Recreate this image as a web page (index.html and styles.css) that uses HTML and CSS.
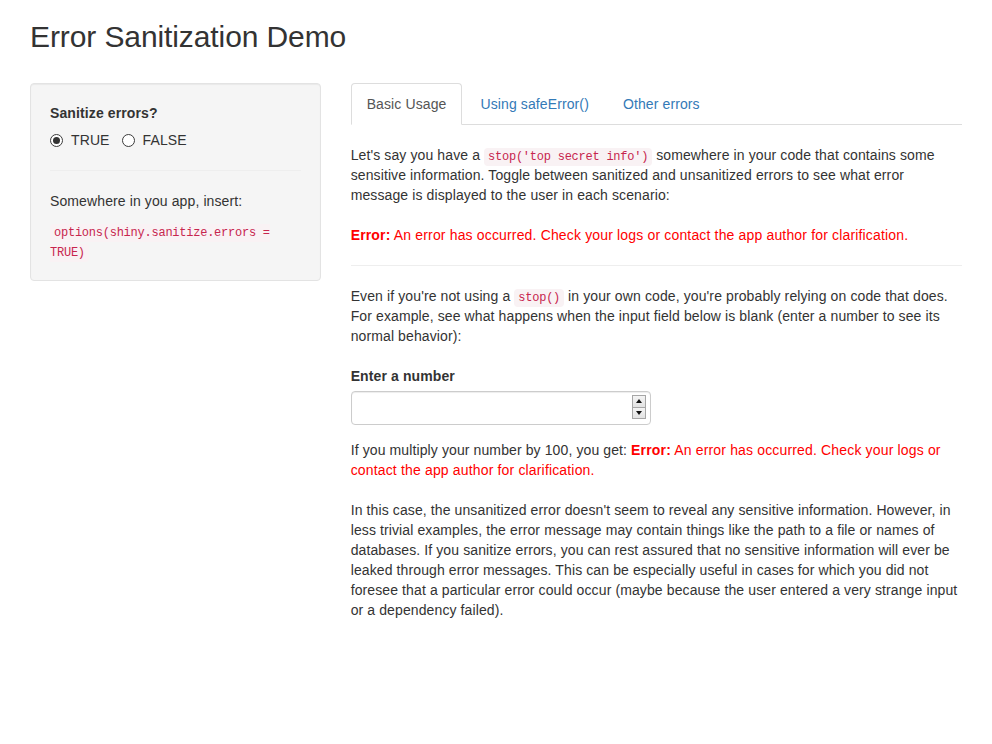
FILE: index.html
```html
<!DOCTYPE html>
<html lang="en">
<head>
<meta charset="utf-8">
<title>Error Sanitization Demo</title>
<link rel="stylesheet" href="styles.css">
</head>
<body>
<h2 class="title">Error Sanitization Demo</h2>
<div class="layout">
  <aside class="well">
    <div class="group-label">Sanitize errors?</div>
    <div class="radios">
      <label class="radio"><span class="circle checked"></span><span>TRUE</span></label>
      <label class="radio"><span class="circle"></span><span>FALSE</span></label>
    </div>
    <hr class="well-rule">
    <p class="well-text">Somewhere in you app, insert:</p>
    <div class="well-code"><code>options(shiny.sanitize.errors = TRUE)</code></div>
  </aside>
  <main class="main">
    <ul class="tabs">
      <li class="tab active"><a>Basic Usage</a></li>
      <li class="tab"><a>Using safeError()</a></li>
      <li class="tab"><a>Other errors</a></li>
    </ul>
    <div class="pane">
      <p class="para gap">Let's say you have a <code>stop('top secret info')</code> somewhere in your code that contains some sensitive information. Toggle between sanitized and unsanitized errors to see what error message is displayed to the user in each scenario:</p>
      <div class="error"><strong>Error:</strong> An error has occurred. Check your logs or contact the app author for clarification.</div>
      <hr class="rule">
      <p class="para gap">Even if you're not using a <code>stop()</code> in your own code, you're probably relying on code that does. For example, see what happens when the input field below is blank (enter a number to see its normal behavior):</p>
      <div class="form-group">
        <label class="field-label">Enter a number</label>
        <div class="input-wrap">
          <input class="num-input" type="text" value="">
          <div class="spinner">
            <span class="spin up"></span>
            <span class="spin down"></span>
          </div>
        </div>
      </div>
      <p class="para gap">If you multiply your number by 100, you get: <span class="error"><strong>Error:</strong> An error has occurred. Check your logs or contact the app author for clarification.</span></p>
      <p class="para">In this case, the unsanitized error doesn't seem to reveal any sensitive information. However, in less trivial examples, the error message may contain things like the path to a file or names of databases. If you sanitize errors, you can rest assured that no sensitive information will ever be leaked through error messages. This can be especially useful in cases for which you did not foresee that a particular error could occur (maybe because the user entered a very strange input or a dependency failed).</p>
    </div>
  </main>
</div>
</body>
</html>
```

FILE: styles.css
```css
* { box-sizing: border-box; }

html, body {
  background: #fff;
}

body {
  margin: 0;
  padding: 0 30px;
  font-family: "Liberation Sans", Arial, sans-serif;
  font-size: 14px;
  line-height: 20px;
  letter-spacing: 0.11px;
  color: #333;
}

.title {
  font-size: 30px;
  font-weight: 500;
  line-height: 33px;
  letter-spacing: -0.1px;
  margin: 20px 0 30px;
}

.layout {
  display: grid;
  grid-template-columns: 290.67px 1fr;
  column-gap: 30px;
  align-items: start;
}

.well {
  background: #f5f5f5;
  border: 1px solid #e3e3e3;
  border-radius: 4px;
  box-shadow: inset 0 1px 1px rgba(0, 0, 0, .05);
  padding: 19px;
}

.group-label {
  font-weight: bold;
  margin-bottom: 7px;
}

.radios {
  display: flex;
  gap: 12px;
}

.radio {
  display: inline-flex;
  align-items: center;
}

.circle {
  width: 13px;
  height: 13px;
  border: 1px solid #3b3b3b;
  border-radius: 50%;
  background: #fff;
  margin-right: 8px;
  display: inline-flex;
  align-items: center;
  justify-content: center;
}

.circle.checked::after {
  content: "";
  width: 7px;
  height: 7px;
  border-radius: 50%;
  background: #333;
}

.well-rule {
  border: 0;
  border-top: 1px solid #eee;
  margin: 20px 0;
}

.well-text {
  margin: 0 0 10px;
}

code {
  font-family: "Liberation Mono", "Courier New", monospace;
  font-size: 12px;
  line-height: 12px;
  letter-spacing: -0.24px;
  padding: 2px 4px;
  color: #c7254e;
  background: #f9f2f4;
  border-radius: 4px;
}

.tabs {
  list-style: none;
  margin: 0;
  padding: 0;
  display: flex;
  border-bottom: 1px solid #ddd;
}

.tab {
  margin-bottom: -1px;
}

.tab a {
  display: block;
  padding: 10px 15px;
  margin-right: 2px;
  line-height: 20px;
  border: 1px solid transparent;
  border-radius: 4px 4px 0 0;
  color: #337ab7;
}

.tab.active a {
  color: #555;
  background: #fff;
  border-color: #ddd;
  border-bottom-color: transparent;
}

.pane {
  padding-top: 20px;
}

.para {
  margin: 0;
}

.para.gap {
  margin-bottom: 20px;
}

.error {
  color: red;
  letter-spacing: 0.16px;
}

.rule {
  border: 0;
  border-top: 1px solid #eee;
  margin: 20px 0;
}

.form-group {
  margin-bottom: 15px;
}

.field-label {
  display: block;
  font-weight: bold;
  margin-bottom: 5px;
}

.input-wrap {
  position: relative;
  width: 300px;
}

.num-input {
  display: block;
  width: 300px;
  height: 34px;
  padding: 6px 12px;
  font: inherit;
  color: #555;
  background: #fff;
  border: 1px solid #ccc;
  border-radius: 4px;
  box-shadow: inset 0 1px 1px rgba(0, 0, 0, .075);
  outline: none;
}

.spinner {
  position: absolute;
  top: 4px;
  right: 5px;
  width: 14px;
  height: 24px;
  display: flex;
  flex-direction: column;
  border: 1px solid #a6a6a6;
  background: #ededed;
}

.spin {
  flex: 1;
  position: relative;
  background: linear-gradient(#f4f4f4, #e2e2e2);
}

.spin.up {
  border-bottom: 1px solid #a6a6a6;
}

.spin::after {
  content: "";
  position: absolute;
  left: 50%;
  top: 50%;
  width: 0;
  height: 0;
  border-left: 3px solid transparent;
  border-right: 3px solid transparent;
  transform: translate(-50%, -50%);
}

.spin.up::after {
  border-bottom: 4px solid #111;
}

.spin.down::after {
  border-top: 4px solid #111;
}
```
